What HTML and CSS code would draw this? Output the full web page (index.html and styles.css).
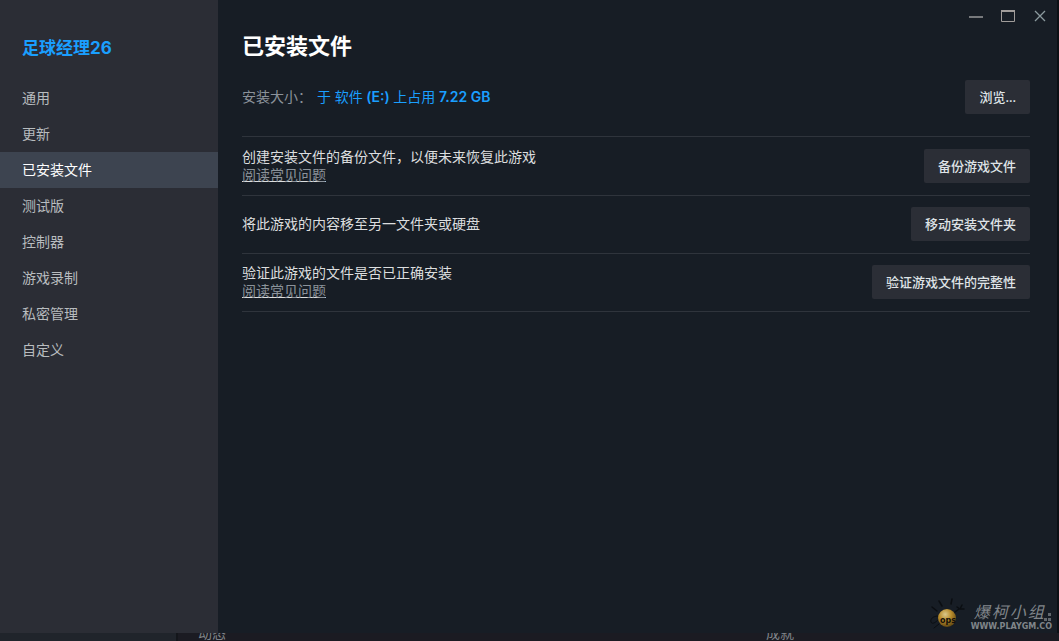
FILE: index.html
```html
<!DOCTYPE html>
<html lang="zh-CN">

<head>
    <meta charset="UTF-8">
    <title>足球经理26</title>
    <link rel="stylesheet" href="styles.css">
</head>

<body>
<div class="window">
    <nav class="sidebar">
        <h2 class="game-name">足球经理26</h2>
        <a class="nav-item" href="#general">通用</a>
        <a class="nav-item" href="#updates">更新</a>
        <a class="nav-item active" href="#files">已安装文件</a>
        <a class="nav-item" href="#betas">测试版</a>
        <a class="nav-item" href="#controller">控制器</a>
        <a class="nav-item" href="#recording">游戏录制</a>
        <a class="nav-item" href="#privacy">私密管理</a>
        <a class="nav-item" href="#customization">自定义</a>
    </nav>

    <main class="content">
        <h1 class="page-title">已安装文件</h1>

        <div class="size-row">
            <div class="size-label">安装大小：</div>
            <div class="size-value">于 软件 <b>(E:)</b> 上占用 <b>7.22 GB</b></div>
            <button class="button">浏览...</button>
        </div>

        <div class="row">
            <div class="row-text">
                <div>创建安装文件的备份文件，以便未来恢复此游戏</div>
                <a class="faq" href="#faq-backup">阅读常见问题</a>
            </div>
            <button class="button">备份游戏文件</button>
        </div>
        <div class="row">
            <div class="row-text">将此游戏的内容移至另一文件夹或硬盘</div>
            <button class="button">移动安装文件夹</button>
        </div>
        <div class="row">
            <div class="row-text">
                <div>验证此游戏的文件是否已正确安装</div>
                <a class="faq" href="#faq-verify">阅读常见问题</a>
            </div>
            <button class="button">验证游戏文件的完整性</button>
        </div>
    </main>

    <div class="window-controls">
        <button class="control" aria-label="最小化">
            <svg width="16" height="16" viewBox="0 0 16 16"><path d="M1 9H15" stroke="#77797c" stroke-width="2"/></svg>
        </button>
        <button class="control" aria-label="最大化">
            <svg width="16" height="16" viewBox="0 0 16 16"><path d="M1.500 3V13.500H14.500V3" fill="none" stroke="#a09c9a"/><path d="M1 3H15" stroke="#a09c9a" stroke-width="2"/></svg>
        </button>
        <button class="control" aria-label="关闭">
            <svg width="16" height="16" viewBox="0 0 16 16"><path d="M3 3L13 13M13 3L3 13" stroke="#8b9a9e" stroke-width="1.300"/></svg>
        </button>
    </div>
</div>

<!-- library page showing below the dialog -->
<div class="backdrop">
    <div class="backdrop-left"></div>
    <div class="backdrop-tab">动态</div>
    <div class="backdrop-tab">成就</div>
</div>

<div class="watermark">
    <svg width="38" height="36" viewBox="0 0 38 36">
        <defs>
            <radialGradient id="ball" cx="0.400" cy="0.300" r="0.750">
                <stop offset="0" stop-color="#d9c88c"/>
                <stop offset="0.450" stop-color="#b98d2c"/>
                <stop offset="1" stop-color="#59400f"/>
            </radialGradient>
        </defs>
        <g fill="none" stroke="#0b0e12" stroke-linecap="round" stroke-width="1.500">
            <path d="M13 9L10 4M22 7L23 2M8 14L3 10"/>
            <path d="M26 15L30 12M28 10L31 12L35 12M31 12L33 8"/>
            <path d="M9 19C4 19 1 22 2 25C3 28 7 25 9 23M10 27L5 31" stroke-width="1"/>
        </g>
        <circle cx="18" cy="21" r="9" fill="url(#ball)"/>
        <text class="ball-text" x="11" y="26">ops</text>
    </svg>
    <div class="watermark-text">
        <div class="team"><span>爆</span><span>柯</span><span>小</span><span>组</span></div>
        <div class="site">WWW.PLAYGM.CO</div>
    </div>
    <svg class="grip" width="8" height="12" viewBox="0 0 8 12">
        <path d="M4 0H7V3H4ZM4 5H7V8H4ZM0 5H3V8H0Z" fill="#62686e"/>
    </svg>
</div>
</body>

</html>
```
FILE: styles.css
```css
* {
    box-sizing: border-box;
}

body {
    margin: 0;
    height: 100vh;
    display: flex;
    flex-direction: column;
    overflow: hidden;
    background: #0c0f14;
    color: #dcdedf;
    font-family: "Noto Sans", "Noto Sans CJK SC", sans-serif;
    font-size: 14px;
    line-height: 18px;
}

.window {
    position: relative;
    flex: 1;
    display: flex;
    min-height: 0;
    margin-right: 2px;
    background: #171d25;
}

.sidebar {
    display: flex;
    flex-direction: column;
    width: 218px;
    padding-top: 36px;
    background: #2b2d35;
}

.game-name {
    margin: 0 22px 20px;
    color: #1a9fff;
    font-family: Inter, "Noto Sans CJK SC", sans-serif;
    font-size: 17px;
    line-height: 24px;
}

.nav-item {
    padding: 0 22px;
    color: #b8bcbf;
    line-height: 36px;
    text-decoration: none;
}

.nav-item.active {
    background: #3d4450;
    color: #fff;
}

.content {
    flex: 1;
    padding: 30px 27px 0 24px;
}

.page-title {
    margin: 0;
    color: #fff;
    font-size: 22px;
    line-height: 30px;
}

.size-row {
    display: flex;
    align-items: center;
    margin: 20px 0 1px;
    padding-bottom: 22px;
    border-bottom: 1px solid #2f343c;
}

.size-label {
    width: 75px;
    color: #8b929a;
}

.size-value {
    flex: 1;
    color: #1a9fff;
}

.size-value b {
    font-family: Inter, sans-serif;
    font-weight: 600;
}

.row {
    display: flex;
    align-items: center;
    justify-content: space-between;
    height: 58px;
    padding-bottom: 1px;
    border-bottom: 1px solid #2f343c;
}

.faq {
    display: block;
    width: max-content;
    color: #8b929a;
    text-decoration: underline #dcdedf;
}

.button {
    height: 34px;
    padding: 0 14px;
    border: 0;
    border-radius: 2px;
    background: #2b2e36;
    color: #dfe3e6;
    font: 500 13px/34px "Noto Sans", "Noto Sans CJK SC", sans-serif;
}

.window-controls {
    position: absolute;
    top: 8px;
    right: 9px;
    display: flex;
    gap: 16px;
}

.control {
    display: flex;
    padding: 0;
    border: 0;
    background: none;
}

.backdrop {
    display: flex;
    align-items: flex-end;
    height: 8px;
    overflow: hidden;
    background: #1b1b22;
    color: #80858a;
    line-height: 16px;
}

.backdrop-left {
    flex: 0 0 178px;
    height: 8px;
    margin-right: 20px;
    border-right: 2px solid #14161b;
    background: #20242b;
}

.backdrop-tab {
    flex: 0 0 568px;
}

.watermark {
    position: absolute;
    right: 7px;
    bottom: 8px;
    display: flex;
    align-items: flex-end;
    color: #80858a;
}

.ball-text {
    fill: #14100a;
    font: bold 8px "DejaVu Sans", sans-serif;
}

.watermark-text {
    margin-left: 4px;
}

.team {
    display: flex;
    gap: 2px;
    padding-left: 3px;
    font-size: 16px;
    font-style: italic;
    line-height: 18px;
}

.site {
    font: bold 8px/12px "DejaVu Sans", sans-serif;
}

.grip {
    position: absolute;
    right: 0;
    bottom: 8px;
}
```
